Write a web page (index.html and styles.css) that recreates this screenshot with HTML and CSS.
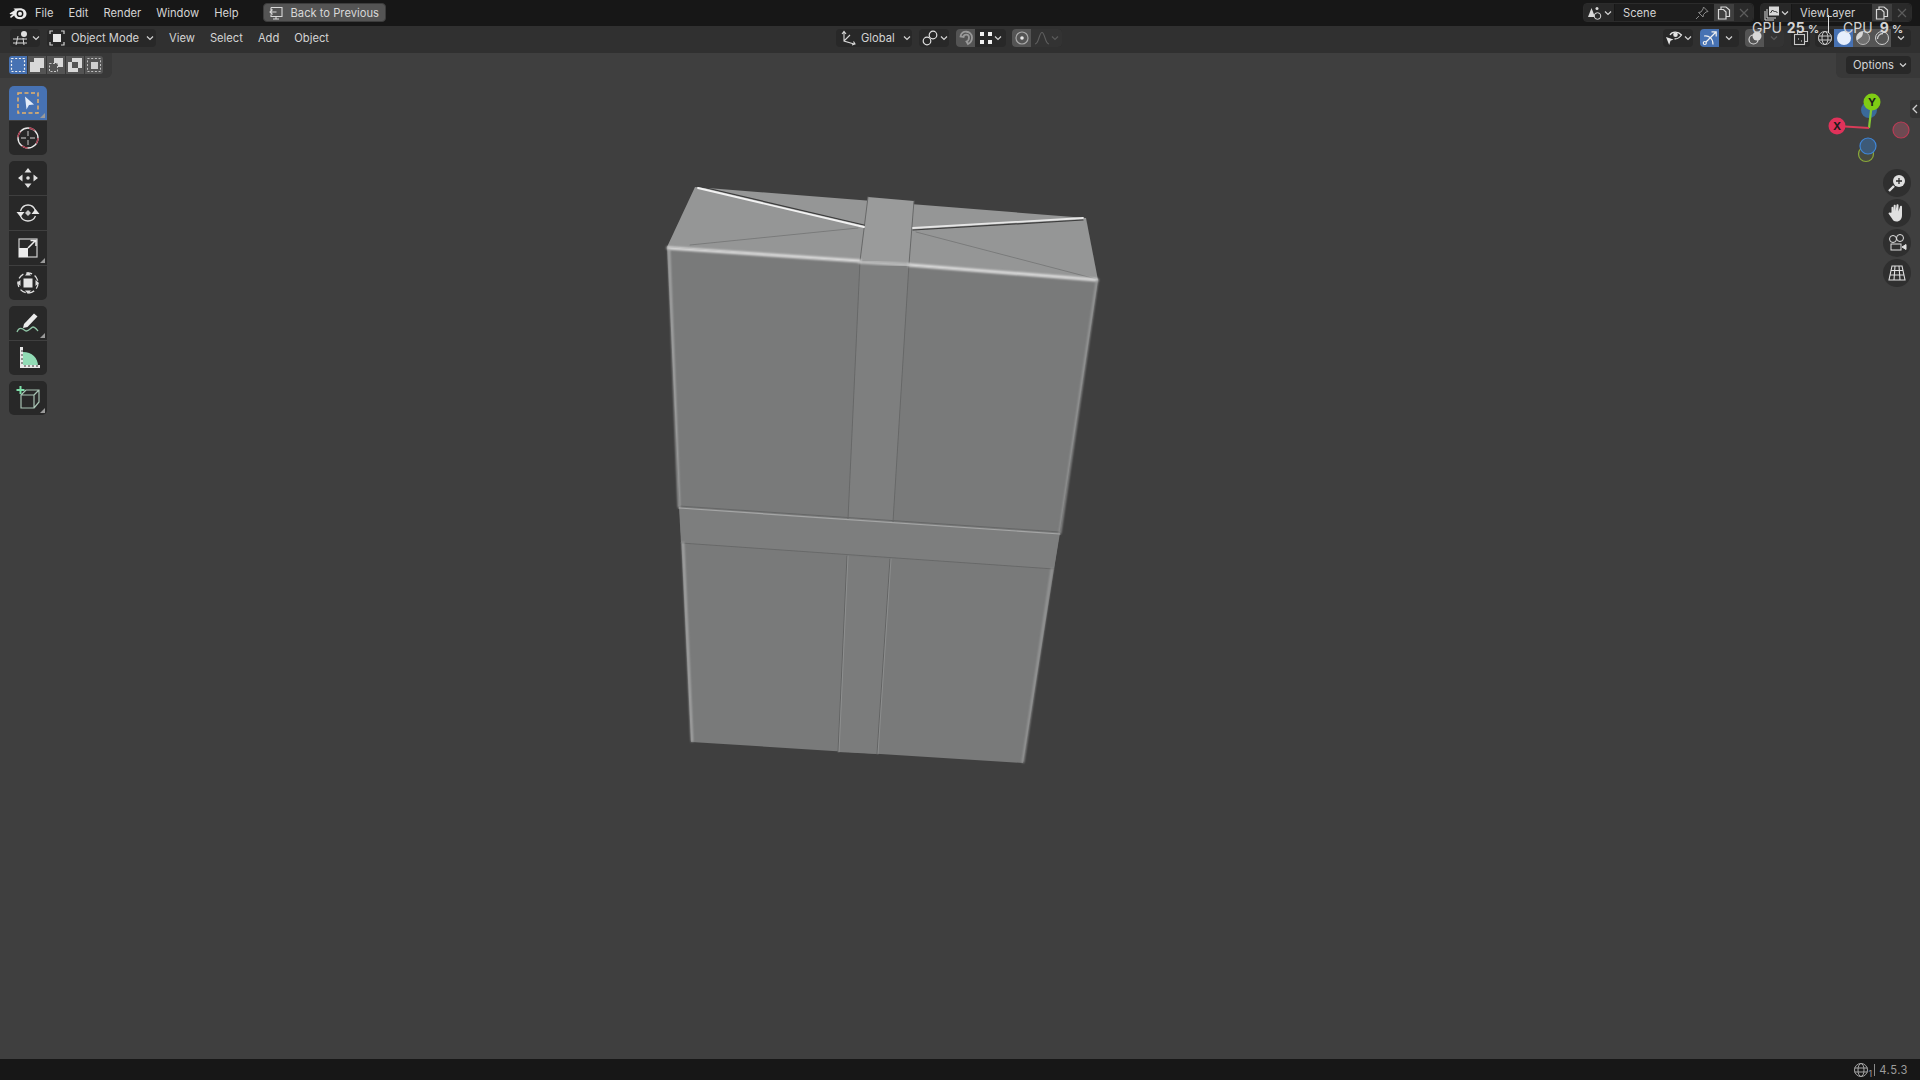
FILE: index.html
```html
<!DOCTYPE html>
<html lang="en">
<head>
  <meta charset="UTF-8">
  <title>Blender 4.5.3</title>
  <link rel="stylesheet" href="styles.css">
</head>
<body>
  <!-- top bar -->
  <div class="topbar">
    <svg class="logo" width="18" height="15" viewBox="0 0 18 15">
      <path d="M.5 8.500L6 5L4.500 3.500L10.500 3.200C14.500 3 17.500 5.500 17.500 8.800C17.500 12 14.500 14.300 11 14.300C8 14.300 5.700 12.800 5.200 10.500L2.600 12.500C1.600 13.200 .6 12.100 1.500 11.300L4 9.200L1.200 9.200Z" fill="#ececec"/>
      <circle cx="11" cy="8.700" r="3.400" fill="#171717"/>
      <circle cx="11" cy="8.700" r="2" fill="#ececec"/>
    </svg>
    <nav class="menu">
      <span>File</span><span>Edit</span><span>Render</span><span>Window</span><span>Help</span>
    </nav>
    <button class="back-btn">
      <svg width="16" height="16" viewBox="0 0 16 16" fill="none" stroke="#d8d8d8" stroke-width="1.100"><path d="M3 2.500h11v9h-11v-2M3 5.500v-3M8 11.500v2.500M5 14h6M8.500 7H2M4.500 4.500L2 7l2.500 2.500"/></svg>
      Back to Previous
    </button>
    <div class="spacer"></div>
    <div class="field-group scene-group">
      <span class="fg-icon">
        <svg width="16" height="16" viewBox="0 0 16 16"><path d="M4.500 3L8 12H1Z" fill="#d8d8d8"/><circle cx="10" cy="3.500" r="1.500" fill="#d8d8d8"/><circle cx="10.500" cy="11" r="3.300" fill="#282828" stroke="#d8d8d8"/></svg>
        <svg class="chev" width="8" height="6" viewBox="0 0 8 6"><path d="M1 1.500L4 4.500L7 1.500"/></svg>
      </span>
      <span class="fg-name">Scene
        <svg class="pin" width="14" height="14" viewBox="0 0 14 14" fill="none" stroke="#8a8a8a"><path d="M8.500 1l4.500 4.500-2 .5-2.500 2.500-.5 2.500-4.500-4.500 2.500-.5L8 3zM4 10l-3 3"/></svg>
      </span>
      <span class="fg-btn"><svg width="14" height="14" viewBox="0 0 14 14" fill="none" stroke="#d8d8d8" stroke-width="1.200"><path d="M4 3.500V1h5l3.500 3v6.500H9.500M1.500 3.500h5l2.500 2.500v7h-7.500z"/></svg></span>
      <span class="fg-btn dim"><svg width="12" height="12" viewBox="0 0 12 12" stroke="#5c5c5c" stroke-width="1.200"><path d="M2 2l8 8M10 2l-8 8"/></svg></span>
    </div>
    <div class="field-group layer-group">
      <span class="fg-icon">
        <svg width="16" height="16" viewBox="0 0 16 16" fill="none" stroke="#d8d8d8"><rect x="5" y="1.500" width="10" height="9" fill="#d8d8d8" stroke="none"/><path d="M6.500 8l2-3 2 2 1-1 2 2" stroke="#2a2a2a"/><path d="M3 4v9h9M1 6v9h9"/></svg>
        <svg class="chev" width="8" height="6" viewBox="0 0 8 6"><path d="M1 1.500L4 4.500L7 1.500"/></svg>
      </span>
      <span class="fg-name">ViewLayer</span>
      <span class="fg-btn"><svg width="14" height="14" viewBox="0 0 14 14" fill="none" stroke="#d8d8d8" stroke-width="1.200"><path d="M4 3.500V1h5l3.500 3v6.500H9.500M1.500 3.500h5l2.500 2.500v7h-7.500z"/></svg></span>
      <span class="fg-btn dim"><svg width="12" height="12" viewBox="0 0 12 12" stroke="#5c5c5c" stroke-width="1.200"><path d="M2 2l8 8M10 2l-8 8"/></svg></span>
    </div>
  </div>

  <div class="main">
    <!-- the model, in page coordinates -->
    <svg class="scene" viewBox="0 26 1920 1033">
      <defs>
        <filter id="soft" x="-10%" y="-10%" width="120%" height="120%"><feGaussianBlur stdDeviation="1"/></filter>
        <filter id="softer" x="-10%" y="-10%" width="120%" height="120%"><feGaussianBlur stdDeviation=".6"/></filter>
      </defs>
      <polygon points="695,187 1086,218 1098,280 667,247" fill="#959696"/>
      <polygon points="667,247 1098,280 1054,569 1023,763 691,742" fill="#797a7a"/>
      <!-- vertical strap -->
      <polygon points="868,197 914,201 909,264 860,261" fill="#9a9b9b"/>
      <polygon points="860,261 909,264 893,522 848,519" fill="#7e7f7f"/>
      <polygon points="847,556 890,559 877,754 838,752" fill="#7b7c7c"/>
      <!-- band round the middle -->
      <polygon points="679,507 1060,533 1054,569 681,543" fill="#7d7e7e"/>
      <g fill="none" stroke-linecap="round">
        <path d="M868,197 L860,261 L848,519 M914,201 L909,264 L893,522" stroke="#676868" stroke-width="1" filter="url(#softer)"/>
        <path d="M847,556 L838,752 M890,559 L877,754" stroke="#636464" stroke-width="1" filter="url(#softer)"/>
        <path d="M848,556 L839,752 M891,559 L878,754" stroke="#a0a1a1" stroke-width="1" opacity=".5"/>
        <path d="M681,543 L1054,569" stroke="#686969" stroke-width="1" filter="url(#softer)"/>
        <path d="M679,508 L1060,534" stroke="#a5a6a6" stroke-width="1.200" filter="url(#softer)"/>
        <path d="M679,506 L1060,532" stroke="#666767" stroke-width="1" filter="url(#softer)"/>
        <!-- creases on the top -->
        <path d="M698,186 L864,225" stroke="#3c3c3c" stroke-width="1.200" filter="url(#softer)"/>
        <path d="M698,188 L864,227" stroke="#f2f2f2" stroke-width="1.800" filter="url(#softer)"/>
        <path d="M913,228 L1083,218" stroke="#e6e6e6" stroke-width="1.800" filter="url(#softer)"/>
        <path d="M913,230 L1083,220" stroke="#3c3c3c" stroke-width="1.200" filter="url(#softer)"/>
        <path d="M690,245 L858,228 M916,232 L1096,279" stroke="#7a7b7b" stroke-width="1" filter="url(#softer)"/>
        <!-- bright top edge -->
        <path d="M668,248 L860,261 M909,265 L1097,280" stroke="#e2e2e2" stroke-width="3" filter="url(#soft)"/>
        <path d="M860,262 L909,265" stroke="#c4c5c5" stroke-width="3" filter="url(#soft)"/>
        <path d="M669,250 L679,507 M683,543 L692,741" stroke="#aeafaf" stroke-width="2" filter="url(#soft)"/>
        <path d="M1097,281 L1060,533 M1052,569 L1023,762" stroke="#9c9d9d" stroke-width="2" filter="url(#soft)"/>
      </g>
    </svg>

    <!-- 3d view header -->
    <div class="header">
      <div class="left-tools">
        <div class="dd ed-type">
          <svg width="20" height="16" viewBox="0 0 20 16" fill="none" stroke="#d8d8d8"><circle cx="12" cy="4" r="3" fill="#e0e0e0" stroke="none"/><path d="M1 9h14M1 13h14M6 6l-2 9M11 8l1 7"/></svg>
          <svg class="chev" width="8" height="6" viewBox="0 0 8 6"><path d="M1 1.500L4 4.500L7 1.500"/></svg>
        </div>
        <div class="dd mode-dd">
          <svg width="16" height="16" viewBox="0 0 16 16" fill="none"><rect x="4" y="4" width="8" height="8" fill="#e6e6e6"/><path d="M1 4V1h3M12 1h3v3M15 12v3h-3M4 15H1v-3" stroke="#d0d0d0" stroke-width="1.200"/></svg>
          <span class="dd-label">Object Mode</span>
          <svg class="chev" width="8" height="6" viewBox="0 0 8 6"><path d="M1 1.500L4 4.500L7 1.500"/></svg>
        </div>
        <nav class="menu header-menu">
          <span>View</span><span>Select</span><span>Add</span><span>Object</span>
        </nav>
      </div>

      <div class="dd global-dd">
        <svg width="16" height="16" viewBox="0 0 16 16" fill="none" stroke="#d8d8d8" stroke-width="1.100"><path d="M4 2v9l10 3M4 11l6-6M2 4l2-2.500L6 4M12 15l3-1-1.500-2.500"/></svg>
        <span class="dd-label">Global</span>
        <svg class="chev" width="8" height="6" viewBox="0 0 8 6"><path d="M1 1.500L4 4.500L7 1.500"/></svg>
      </div>
      <div class="dd pivot-dd">
        <svg width="16" height="16" viewBox="0 0 16 16" fill="none" stroke="#e0e0e0" stroke-width="1.200"><circle cx="5" cy="11" r="3.800"/><circle cx="11" cy="5" r="3.800"/></svg>
        <svg class="chev" width="8" height="6" viewBox="0 0 8 6"><path d="M1 1.500L4 4.500L7 1.500"/></svg>
      </div>
      <div class="seg snap-seg">
        <span class="seg-btn lit"><svg width="16" height="16" viewBox="0 0 16 16" fill="none" stroke="#9a9a9a" stroke-width="1.800"><path d="M2.500 6.500C3 -.5 14 .5 14 7.500C14 11 12 13 10 14L8.500 11.500C10 11 11 9.500 11 7.500C11 4 6 3.500 5.500 7z"/></svg></span>
        <span class="seg-btn wide">
          <svg width="14" height="14" viewBox="0 0 14 14" fill="#f0f0f0"><rect x="1" y="1" width="4" height="4"/><rect x="9" y="1" width="4" height="4"/><rect x="1" y="9" width="4" height="4"/><rect x="9" y="9" width="4" height="4"/></svg>
          <svg class="chev" width="8" height="6" viewBox="0 0 8 6"><path d="M1 1.500L4 4.500L7 1.500"/></svg>
        </span>
      </div>
      <div class="seg prop-seg">
        <span class="seg-btn lit"><svg width="16" height="16" viewBox="0 0 16 16" fill="none" stroke="#a8a8a8" stroke-width="1.200"><circle cx="8" cy="8" r="6"/><circle cx="8" cy="8" r="1.800" fill="#e8e8e8" stroke="none"/></svg></span>
        <span class="seg-btn wide dimmed">
          <svg width="16" height="14" viewBox="0 0 16 14" fill="none" stroke="#5e5e5e" stroke-width="1.200"><path d="M1 13C5 13 5 1.500 8 1.500S11 13 15 13"/></svg>
          <svg class="chev off" width="8" height="6" viewBox="0 0 8 6"><path d="M1 1.500L4 4.500L7 1.500"/></svg>
        </span>
      </div>

      <div class="spacer"></div>
      <div class="dd eye-dd">
        <svg width="18" height="16" viewBox="0 0 18 16"><path d="M5 5C7 1.500 13 1 16.500 5C14 8.500 11 9 9.500 8.800" fill="none" stroke="#e4e4e4" stroke-width="1.200"/><circle cx="10.500" cy="4.800" r="2.300" fill="#e4e4e4"/><path d="M1 7l7.500 2.500-3 1.300L4.200 15z" fill="#e4e4e4"/></svg>
        <svg class="chev" width="8" height="6" viewBox="0 0 8 6"><path d="M1 1.500L4 4.500L7 1.500"/></svg>
      </div>
      <div class="seg giz-seg">
        <span class="seg-btn blue"><svg width="16" height="16" viewBox="0 0 16 16" fill="none" stroke="#f0f0f0" stroke-width="1.200"><circle cx="2.800" cy="13" r="1.500"/><path d="M4 12L14 2M9.500 1.800h4.700v4.700M2 6c5-1 9 2.500 9 8.500"/></svg></span>
        <span class="seg-btn narrow"><svg class="chev" width="8" height="6" viewBox="0 0 8 6"><path d="M1 1.500L4 4.500L7 1.500"/></svg></span>
      </div>
      <div class="seg over-seg">
        <span class="seg-btn lit"><svg width="16" height="16" viewBox="0 0 16 16" fill="none" stroke="#d8d8d8" stroke-width="1.200"><circle cx="6.500" cy="9.500" r="4.500"/><circle cx="10" cy="6" r="4.500" fill="#d8d8d8" stroke="none"/></svg></span>
        <span class="seg-btn narrow dimmed"><svg class="chev off" width="8" height="6" viewBox="0 0 8 6"><path d="M1 1.500L4 4.500L7 1.500"/></svg></span>
      </div>
      <div class="seg xray-seg">
        <span class="seg-btn"><svg width="16" height="16" viewBox="0 0 16 16" fill="none" stroke="#c8c8c8" stroke-width="1.100"><rect x="1.500" y="4.500" width="10" height="10"/><path d="M4.500 4V1.500h10v10H12"/><path d="M5 9h1M8 11h1" stroke="#e8e8e8"/></svg></span>
      </div>
      <div class="seg shade-seg">
        <span class="seg-btn"><svg width="16" height="16" viewBox="0 0 16 16" fill="none" stroke="#c8c8c8"><circle cx="8" cy="8" r="6.500"/><ellipse cx="8" cy="8" rx="3" ry="6.500"/><path d="M1.500 6h13M1.500 10h13"/></svg></span>
        <span class="seg-btn blue"><svg width="16" height="16" viewBox="0 0 16 16"><circle cx="8" cy="8" r="7" fill="#e6eefc"/></svg></span>
        <span class="seg-btn lit"><svg width="16" height="16" viewBox="0 0 16 16"><circle cx="8" cy="8" r="6.500" fill="#707070" stroke="#b8b8b8"/><path d="M8 1.500A6.500 6.500 0 0 0 2 10.500C5 7.500 8 8 8 1.500Z" fill="#d8d8d8"/></svg></span>
        <span class="seg-btn lit"><svg width="16" height="16" viewBox="0 0 16 16" fill="none" stroke="#d0d0d0"><circle cx="8" cy="8" r="6.500"/><path d="M3.500 9C3.500 6 6 3.500 9 3.500" stroke-width="1.300"/></svg></span>
        <span class="seg-btn narrow"><svg class="chev" width="8" height="6" viewBox="0 0 8 6"><path d="M1 1.500L4 4.500L7 1.500"/></svg></span>
      </div>
    </div>

    <!-- tool settings row -->
    <div class="tool-header">
      <div class="ts-panel ts-left">
        <div class="select-modes">
          <span class="sm-btn active"><svg width="16" height="16" viewBox="0 0 16 16"><rect x="1.500" y="1.500" width="13" height="13" fill="none" stroke="#f0f0f0" stroke-width="1.200" stroke-dasharray="2 1.700"/></svg></span>
          <span class="sm-btn"><svg width="16" height="16" viewBox="0 0 16 16" fill="#d8d8d8"><path d="M5 1h10v10H11v4H1V5h4z"/></svg></span>
          <span class="sm-btn"><svg width="16" height="16" viewBox="0 0 16 16"><path d="M6 1h9v9H10V6H6z" fill="#d8d8d8"/><rect x="1.500" y="6.500" width="8" height="8" fill="none" stroke="#c8c8c8" stroke-dasharray="2 1.500"/></svg></span>
          <span class="sm-btn"><svg width="16" height="16" viewBox="0 0 16 16" fill="#d8d8d8"><path d="M5 1h10v10h-4V5H5zM1 5h4v6h6v4H1z"/></svg></span>
          <span class="sm-btn"><svg width="16" height="16" viewBox="0 0 16 16"><rect x="5" y="5" width="7" height="7" fill="#d0d0d0"/><rect x="1.500" y="1.500" width="13" height="13" fill="none" stroke="#c0c0c0" stroke-dasharray="2 1.700"/></svg></span>
        </div>
      </div>
      <div class="spacer"></div>
      <div class="ts-panel ts-right">
        <div class="dd options-dd">
          <span class="dd-label">Options</span>
          <svg class="chev" width="8" height="6" viewBox="0 0 8 6"><path d="M1 1.500L4 4.500L7 1.500"/></svg>
        </div>
      </div>
    </div>

    <!-- tool shelf -->
    <div class="shelf">
      <div class="tool-group">
        <div class="tool active corner">
          <svg width="26" height="26" viewBox="0 0 26 26" fill="none"><rect x="3" y="3" width="20" height="20" stroke="#e8b26a" stroke-width="1.500" stroke-dasharray="4 2.500"/><path d="M10 6.500L19 14.500L14 15L11.500 19.500Z" fill="#e4ecf8"/></svg>
        </div>
        <div class="tool">
          <svg width="26" height="26" viewBox="0 0 26 26" fill="none" stroke-width="1.400"><circle cx="13" cy="13" r="10" stroke="#e8e8e8"/><circle cx="13" cy="13" r="10" stroke="#a83a4c" stroke-dasharray="6 10"/><path d="M13 6v5M13 15v5M6 13h5M15 13h5" stroke="#9a9a9a"/></svg>
        </div>
      </div>
      <div class="tool-group">
        <div class="tool">
          <svg width="26" height="26" viewBox="0 0 26 26" fill="#e0e0e0"><path d="M13 3l3.500 4.500h-7zM13 23l-3.500-4.500h7zM3 13l4.500-3.500v7zM23 13l-4.500 3.500v-7z"/><circle cx="13" cy="13" r="1.800"/></svg>
        </div>
        <div class="tool">
          <svg width="26" height="26" viewBox="0 0 26 26" fill="none"><path d="M5.500 11C7 6.500 10 5 13 5s6 1.500 7.500 6M20.500 16C19 19.500 16 21 13 21S7 19.500 5.500 16" stroke="#e0e0e0" stroke-width="1.300"/><path d="M1.500 12h8L5.500 17zM24.500 14h-8l4-5z" fill="#e8e8e8"/><path d="M13 10l3 3-3 3-3-3z" fill="#c8c8c8"/></svg>
        </div>
        <div class="tool corner">
          <svg width="26" height="26" viewBox="0 0 26 26" fill="none"><rect x="4" y="4" width="18" height="18" stroke="#cfcfcf" stroke-width="1.200"/><rect x="4" y="13" width="9" height="9" fill="#ececec"/><path d="M13 13l7-7M15.500 5.500h5.500v5.500" stroke="#ececec" stroke-width="1.500"/></svg>
        </div>
        <div class="tool">
          <svg width="26" height="26" viewBox="0 0 26 26" fill="none"><circle cx="13" cy="13" r="10" stroke="#dcdcdc" stroke-width="1.300" stroke-dasharray="6 3"/><rect x="8.500" y="8.500" width="9" height="9" fill="#e6e6e6"/><path d="M13 2l3 3.500h-6zM13 24l-3-3.500h6zM2 13l3.500-3v6zM24 13l-3.500 3v-6z" fill="#dcdcdc"/></svg>
        </div>
      </div>
      <div class="tool-group">
        <div class="tool corner">
          <svg width="26" height="26" viewBox="0 0 26 26" fill="none"><path d="M9 14L19 3.500l3.500 3L12.500 17l-4.500 1z" fill="#ececec"/><path d="M2 22c2-5 5-4 8-1.500 3 2.500 6-3.500 8-3.500s3 1.500 5 4" stroke="#8fc4a5" stroke-width="1.300"/></svg>
        </div>
        <div class="tool">
          <svg width="26" height="26" viewBox="0 0 26 26"><path d="M8 7v14h15C23 13 17 7 8 7z" fill="#92dcb6"/><path d="M5 2h3v18h17v3H5z" fill="#e8e8e8"/><path d="M8 6h-2M8 10h-2M8 14h-2M8 18h-2M10 22v-2M14 22v-2M18 22v-2M22 22v-2" stroke="#3a3a3a"/></svg>
        </div>
      </div>
      <div class="tool-group">
        <div class="tool corner">
          <svg width="26" height="26" viewBox="0 0 26 26" fill="none" stroke="#a8c4b4" stroke-width="1.200"><path d="M6 10h13v13H6zM6 10l5-5h13v12l-5 6M19 10l5-5" /><path d="M5.500 1v8M1.500 5h8" stroke="#7fe0aa" stroke-width="2"/></svg>
        </div>
      </div>
    </div>

    <!-- navigation gizmo -->
    <div class="panel-tab"><svg width="6" height="10" viewBox="0 0 6 10" fill="none" stroke="#cfcfcf" stroke-width="1.300"><path d="M5 1L1 5l4 4"/></svg></div>
    <svg class="axes" width="90" height="90" viewBox="1825 90 90 90">
      <circle cx="1869" cy="110" r="8" fill="#3a6a9a"/>
      <circle cx="1901" cy="130" r="8" fill="#6e4a52" stroke="#b83c55" stroke-width="1.200"/>
      <circle cx="1866" cy="154" r="7.500" fill="#474a40" stroke="#8aa83a" stroke-width="1.200"/>
      <circle cx="1868" cy="146" r="8" fill="#3d5a78" stroke="#3f86d8" stroke-width="1.200"/>
      <path d="M1869 128L1872 102" stroke="#86c932" stroke-width="2.200"/>
      <path d="M1869 128L1837 126" stroke="#d83c58" stroke-width="2.200"/>
      <circle cx="1837" cy="126" r="8.500" fill="#e0325a"/>
      <circle cx="1872" cy="102" r="8.500" fill="#7fcc14"/>
      <text x="1837" y="130" class="axis-label">X</text>
      <text x="1872" y="106" class="axis-label">Y</text>
    </svg>
    <div class="nav-btns">
      <span class="nav-btn"><svg width="20" height="20" viewBox="0 0 20 20" fill="none" stroke="#e0e0e0"><circle cx="12" cy="8" r="6" fill="#e0e0e0" stroke="none"/><path d="M12 5v6M9 8h6" stroke="#2a2a2a" stroke-width="1.300"/><path d="M7 13l-5 5" stroke-width="2.400"/></svg></span>
      <span class="nav-btn"><svg width="20" height="20" viewBox="0 0 20 20" fill="#e0e0e0"><path d="M4.500 9.500V4.500c0-1 1.800-1 1.800 0V8L6.700 2.500c0-1 2-1 2 0V8L9.500 2c0-1 2-1 2 0V8.500L13 3.500c.3-1 2-.8 2 .3V12c0 4-2 6.500-5.500 6.500-2.500 0-3.500-1-4.500-3L1.800 11c-.8-1 .5-2 1.500-1.200z"/></svg></span>
      <span class="nav-btn"><svg width="20" height="20" viewBox="0 0 20 20" fill="none" stroke="#e0e0e0"><circle cx="6" cy="6" r="3.500"/><circle cx="13" cy="5" r="3.500"/><rect x="4" y="11" width="10" height="6"/><path d="M15 14l4-2.500v5z" fill="#e0e0e0"/></svg></span>
      <span class="nav-btn"><svg width="20" height="20" viewBox="0 0 20 20" fill="none" stroke="#e0e0e0" stroke-width="1.100"><path d="M5 3h10l3 14H2zM3.500 7.500h13M2.700 12h14.600M8 3l-1 14M12 3l1 14"/></svg></span>
    </div>
  </div>

  <!-- status bar -->
  <div class="statusbar">
    <svg width="16" height="16" viewBox="0 0 16 16" fill="none" stroke="#a8a8a8"><circle cx="8" cy="8" r="6.500"/><ellipse cx="8" cy="8" rx="3" ry="6.500"/><path d="M1.500 6h13M1.500 10h13"/></svg>
    <sub class="sb-count">1</sub>
    <span class="sb-sep"></span>
    <span class="sb-version">4.5.3</span>
  </div>

  <!-- system monitor overlay -->
  <div class="monitor">
    <span>GPU</span><b class="m-gpu">25 <small>%</small></b><span class="m-cpu">CPU</span><b class="m-cpu-val">9 <small>%</small></b>
  </div>
  <div class="text-cursor"></div>
</body>
</html>
```

FILE: styles.css
```css
* {
  margin: 0;
  padding: 0;
  box-sizing: border-box;
}

html, body {
  height: 100%;
  overflow: hidden;
}

body {
  display: flex;
  flex-direction: column;
  font-family: Inter, "Noto Sans", sans-serif;
  font-size: 11.2px;
  color: #d4d4d4;
  background: #3f3f3f;
}

svg {
  display: block;
  flex: none;
}

.spacer {
  flex: 1;
}

.chev {
  fill: none;
  stroke: #d4d4d4;
  stroke-width: 1.200;
}

.chev.off {
  stroke: #5a5a5a;
}

/* top bar */
.topbar {
  height: 26px;
  flex: none;
  display: flex;
  align-items: center;
  padding: 0 8px 1px 9px;
  background: #171717;
}

.logo {
  margin-right: 8px;
}

.menu {
  display: flex;
  gap: 15px;
  white-space: nowrap;
}

.back-btn {
  display: flex;
  align-items: center;
  gap: 7px;
  width: 123px;
  height: 19px;
  margin-left: 24px;
  padding-left: 4px;
  border: 1px solid #3c3c3c;
  border-radius: 4px;
  background: #545454;
  color: #d8d8d8;
  font: inherit;
}

.field-group {
  display: flex;
  height: 19px;
  border-radius: 4px;
  border: 1px solid #2b2b2b;
  background: #1d1d1d;
}

.scene-group {
  width: 171px;
}

.layer-group {
  width: 152px;
  margin-left: 6px;
}

.fg-icon {
  width: 31px;
  display: flex;
  align-items: center;
  justify-content: center;
  gap: 1px;
  background: #282828;
  border-right: 1px solid #171717;
}

.fg-name {
  flex: 1;
  display: flex;
  align-items: center;
  justify-content: space-between;
  padding: 0 5px 0 8px;
}

.fg-btn {
  width: 20px;
  display: flex;
  align-items: center;
  justify-content: center;
  background: #3f3f3f;
}

.fg-btn.dim {
  width: 19px;
  background: #2a2a2a;
  border-radius: 0 4px 4px 0;
}

/* 3d view */
.main {
  flex: 1;
  position: relative;
  min-height: 0;
}

.scene {
  position: absolute;
  inset: 0;
  width: 100%;
  height: 100%;
}

.header {
  position: relative;
  height: 27px;
  display: flex;
  align-items: center;
  padding: 0 9px 3px 10px;
  background: #303030;
}

.left-tools {
  width: 826px;
  display: flex;
  align-items: center;
}

.dd {
  height: 18px;
  display: flex;
  align-items: center;
  border-radius: 4px;
  background: #282828;
  white-space: nowrap;
}

.ed-type {
  width: 30px;
  padding-left: 2px;
}

.mode-dd {
  width: 109px;
  margin-left: 7px;
  padding-left: 2px;
  gap: 6px;
}

.mode-dd .chev {
  margin-left: 1px;
}

.header-menu {
  margin-left: 13px;
}

.global-dd {
  width: 76px;
  padding-left: 4px;
  gap: 5px;
}

.global-dd .chev {
  margin-left: 3px;
}

.pivot-dd {
  width: 30px;
  margin-left: 7px;
  padding-left: 3px;
  gap: 2px;
}

.seg {
  height: 18px;
  display: flex;
  background: #282828;
  border-radius: 4px;
  overflow: hidden;
}

.seg-btn {
  width: 19px;
  display: flex;
  align-items: center;
  justify-content: center;
}

.seg-btn.wide {
  width: 31px;
  gap: 1px;
}

.seg-btn.narrow {
  width: 20px;
}

.seg-btn.lit {
  background: #545454;
}

.seg-btn.blue {
  background: #4772b3;
}

.seg-btn.dimmed {
  background: #333333;
}

.snap-seg {
  margin-left: 7px;
}

.prop-seg {
  margin-left: 6px;
}

.eye-dd {
  width: 30px;
  padding-left: 2px;
  gap: 1px;
}

.giz-seg {
  margin-left: 7px;
}

.over-seg {
  margin-left: 6px;
}

.xray-seg {
  margin-left: 7px;
}

.shade-seg {
  margin-left: 5px;
}

/* tool settings */
.tool-header {
  position: relative;
  height: 25px;
  display: flex;
}

.ts-panel {
  display: flex;
  align-items: center;
  background: #383838;
}

.ts-left {
  width: 112px;
  padding: 0 0 1px 9px;
  border-radius: 0 0 6px 0;
}

.ts-right {
  width: 84px;
  padding: 0 0 1px 10px;
  border-radius: 0 0 0 6px;
}

.select-modes {
  display: flex;
  gap: 1px;
  height: 18px;
}

.sm-btn {
  width: 18px;
  display: flex;
  align-items: center;
  justify-content: center;
  background: #545454;
}

.sm-btn:first-child {
  border-radius: 3px 0 0 3px;
}

.sm-btn:last-child {
  border-radius: 0 3px 3px 0;
}

.sm-btn.active {
  background: #4772b3;
}

.options-dd {
  width: 65px;
  padding-left: 7px;
  gap: 5px;
}

/* tool shelf */
.shelf {
  position: relative;
  width: 38px;
  margin: 8px 0 0 9px;
  display: flex;
  flex-direction: column;
  gap: 6px;
}

.tool-group {
  display: flex;
  flex-direction: column;
  gap: 1px;
  border-radius: 5px;
  overflow: hidden;
}

.tool {
  position: relative;
  height: 34px;
  display: flex;
  align-items: center;
  justify-content: center;
  background: #282828;
}

.tool.active {
  background: #4772b3;
}

.tool.corner::after {
  content: "";
  position: absolute;
  right: 2px;
  bottom: 2px;
  border-style: solid;
  border-width: 0 0 5px 5px;
  border-color: transparent transparent #9a9a9a transparent;
}

/* navigation */
.panel-tab {
  position: absolute;
  top: 74px;
  right: 0;
  width: 10px;
  height: 18px;
  display: flex;
  align-items: center;
  justify-content: center;
  background: #333333;
  border-radius: 3px 0 0 3px;
}

.axes {
  position: absolute;
  left: 1825px;
  top: 64px;
}

.axis-label {
  font-size: 11px;
  font-weight: 700;
  fill: #1c1c1c;
  text-anchor: middle;
}

.nav-btns {
  position: absolute;
  top: 143px;
  left: 1883px;
  display: flex;
  flex-direction: column;
  gap: 2px;
}

.nav-btn {
  width: 28px;
  height: 28px;
  display: flex;
  align-items: center;
  justify-content: center;
  border-radius: 50%;
  background: #2f2f2f;
}

/* status bar */
.statusbar {
  height: 21px;
  flex: none;
  display: flex;
  align-items: center;
  padding: 0 12px 0 0;
  justify-content: flex-end;
  background: #171717;
  color: #9c9c9c;
}

.sb-count {
  font-size: 9px;
  margin: 8px 2px 0 0;
}

.sb-sep {
  width: 1px;
  height: 12px;
  margin-right: 4px;
  background: #8a8a8a;
}

.sb-version {
  letter-spacing: .5px;
}

/* gpu / cpu readout lying over the header */
.monitor {
  position: absolute;
  top: 20px;
  left: 1752px;
  display: flex;
  font-size: 14px;
  line-height: 16px;
  color: #d4d4d4;
}

.monitor b {
  margin-left: 5px;
  font-weight: 700;
}

.monitor small {
  font-size: 11px;
}

.monitor .m-cpu {
  margin-left: 24px;
}

.monitor .m-cpu-val {
  margin-left: 7px;
}

.text-cursor {
  position: absolute;
  top: 15px;
  left: 1828px;
  width: 1px;
  height: 18px;
  background: #e0e0e0;
}
```
